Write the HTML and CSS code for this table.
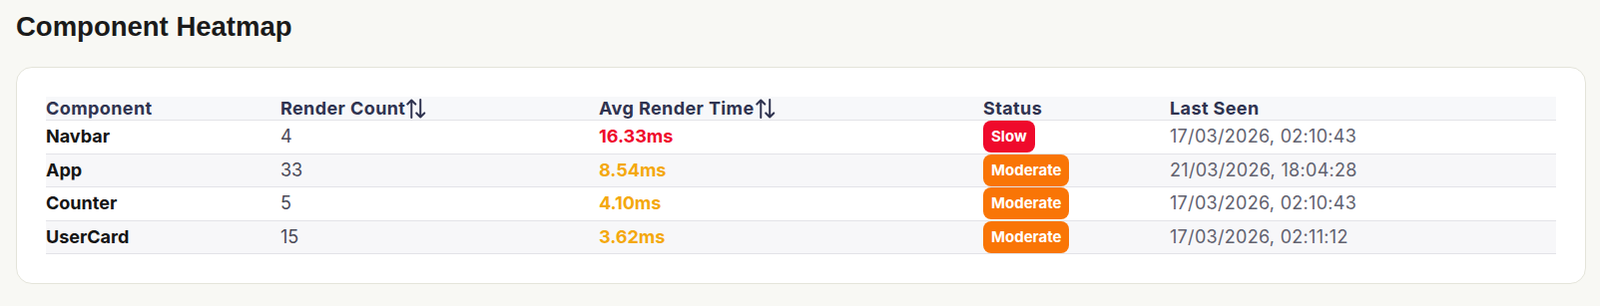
FILE: index.html
```html
<!DOCTYPE html>
<html lang="en">
<head>
<meta charset="utf-8">
<title>Component Heatmap</title>
<link rel="stylesheet" href="styles.css">
</head>
<body>
  <h1 class="title">Component Heatmap</h1>
  <section class="card">
    <table class="heatmap">
      <colgroup>
        <col class="c-name">
        <col class="c-count">
        <col class="c-time">
        <col class="c-status">
        <col class="c-seen">
      </colgroup>
      <thead>
        <tr>
          <th>Component</th>
          <th>Render Count<svg class="sort" viewBox="0 0 19 19" width="20" height="20" aria-hidden="true"><path d="M5 18V1.5M1.2 5.3L5 1.5L8.8 5.3M13.5 1V17.5M9.7 13.7L13.5 17.5L17.3 13.7"/></svg></th>
          <th>Avg Render Time<svg class="sort" viewBox="0 0 19 19" width="20" height="20" aria-hidden="true"><path d="M5 18V1.5M1.2 5.3L5 1.5L8.8 5.3M13.5 1V17.5M9.7 13.7L13.5 17.5L17.3 13.7"/></svg></th>
          <th>Status</th>
          <th>Last Seen</th>
        </tr>
      </thead>
      <tbody>
        <tr>
          <td class="name">Navbar</td>
          <td class="count">4</td>
          <td class="time slow">16.33ms</td>
          <td><span class="badge badge-slow">Slow</span></td>
          <td class="seen">17/03/2026, 02:10:43</td>
        </tr>
        <tr>
          <td class="name">App</td>
          <td class="count">33</td>
          <td class="time moderate">8.54ms</td>
          <td><span class="badge badge-moderate">Moderate</span></td>
          <td class="seen">21/03/2026, 18:04:28</td>
        </tr>
        <tr>
          <td class="name">Counter</td>
          <td class="count">5</td>
          <td class="time moderate">4.10ms</td>
          <td><span class="badge badge-moderate">Moderate</span></td>
          <td class="seen">17/03/2026, 02:10:43</td>
        </tr>
        <tr>
          <td class="name">UserCard</td>
          <td class="count">15</td>
          <td class="time moderate">3.62ms</td>
          <td><span class="badge badge-moderate">Moderate</span></td>
          <td class="seen">17/03/2026, 02:11:12</td>
        </tr>
      </tbody>
    </table>
  </section>
</body>
</html>
```

FILE: styles.css
```css
html, body {
  margin: 0;
  padding: 0;
}

body {
  background: #f8f8f4;
  padding: 11px 14px 0 16px;
  font-family: Inter, "Liberation Sans", sans-serif;
}

.title {
  margin: 0 0 25px 0;
  font-family: "Liberation Sans", Arial, sans-serif;
  font-size: 27.5px;
  font-weight: 700;
  line-height: 31px;
  color: #1a1a1a;
}

.card {
  background: #ffffff;
  border: 1px solid #e4e4da;
  border-radius: 16px;
  padding: 29px 29px 29px 29px;
}

.heatmap {
  width: 100%;
  border-collapse: collapse;
  font-size: 18px;
}

.c-name { width: 235px; }
.c-count { width: 319px; }
.c-time { width: 385px; }
.c-status { width: 187px; }

.heatmap th {
  background: #f7f8fa;
  text-align: left;
  padding: 0;
  height: 23px;
  line-height: 22px;
  font-weight: 700;
  letter-spacing: 0.4px;
  color: #2f3350;
  border-bottom: 1px solid #e3e3e8;
  white-space: nowrap;
}

.sort {
  display: inline-block;
  vertical-align: -4px;
  margin-left: 1px;
  fill: none;
  stroke: #2f3350;
  stroke-width: 1.9;
  stroke-linecap: round;
  stroke-linejoin: round;
}

.heatmap td {
  padding: 0;
  height: 32.5px;
  line-height: 22px;
  border-bottom: 1px solid #e3e3e8;
  white-space: nowrap;
}

.heatmap tbody tr:nth-child(even) td {
  background: #f7f7f9;
}

.name {
  font-weight: 700;
  color: #141414;
}

.count {
  color: #4a4a57;
}

.time {
  font-weight: 700;
}

.time.slow { color: #ef0a2c; }
.time.moderate { color: #f4a80e; }

.seen {
  color: #62626f;
  letter-spacing: 0.3px;
}

.badge {
  display: inline-block;
  height: 32px;
  line-height: 32px;
  padding: 0 8px;
  border-radius: 8px;
  color: #ffffff;
  font-size: 15px;
  font-weight: 700;
  vertical-align: middle;
}

.badge-slow { background: #ef0a2c; }
.badge-moderate { background: #f97506; }
```
